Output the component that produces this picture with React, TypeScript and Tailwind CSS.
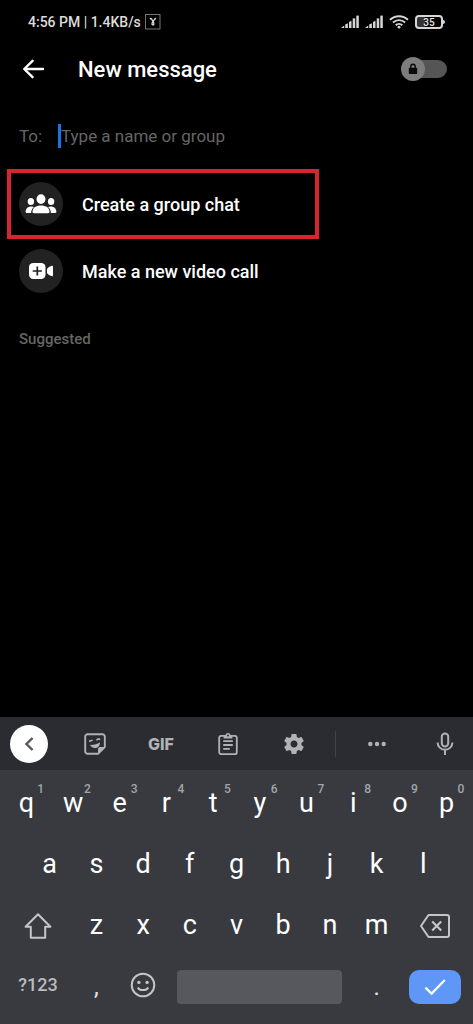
import type { ReactNode } from "react";

function SignalIcon() {
  return (
    <svg width="18" height="14" viewBox="0 0 18 14" fill="#d6d6d6" aria-hidden="true">
      <path d="M0 13 L3.2 10.4 V13Z" />
      <path d="M4.2 9.6 L6.9 8.2 V13 H4.2Z" />
      <path d="M8 7 L10.5 5.7 V13 H8Z" />
      <rect x="11.7" y="3.4" width="2.5" height="9.6" />
      <rect x="15.3" y="0.6" width="2.5" height="12.4" />
    </svg>
  );
}

function WifiIcon() {
  return (
    <svg width="20" height="14" viewBox="0 0 20 14" fill="none" stroke="#d6d6d6" strokeWidth="1.9" aria-hidden="true">
      <path d="M1 4.8 C6 0 14 0 19 4.8" />
      <path d="M3.9 7.5 C7.4 4.3 12.6 4.3 16.1 7.5" />
      <path d="M6.7 10.2 C8.6 8.4 11.4 8.4 13.3 10.2" />
      <circle cx="10" cy="12.2" r="1.4" fill="#d6d6d6" stroke="none" />
    </svg>
  );
}

function StatusBar() {
  return (
    <div className="flex h-11 items-center justify-between px-7">
      <div className="flex items-center gap-1 text-[14px] font-medium text-[#dcdcdc]">
        <span>4:56 PM | 1.4KB/s</span>
        <svg width="16" height="16" viewBox="0 0 16 16" fill="none" aria-hidden="true">
          <rect x="0.5" y="0.5" width="14.5" height="14.5" stroke="#777" />
          <path d="M4.8 4.5 C6.6 4.2 7 5.6 8 7.3 C9 9.2 9.3 10.8 8 10.8 C6.6 10.8 6.8 9 8 7.3 L10.8 4" stroke="#ddd" strokeWidth="1.3" />
        </svg>
      </div>
      <div className="flex items-center gap-[6px]">
        <SignalIcon />
        <SignalIcon />
        <WifiIcon />
        <div className="flex items-center">
          <span className="flex h-[14px] w-7 items-center justify-center rounded-[4px] border-2 border-[#d6d6d6] bg-linear-to-r from-[#333] from-35% to-black to-35% text-[10px] font-medium text-[#e6e6e6]">
            35
          </span>
          <span className="h-1 w-[2px] rounded-r-sm bg-[#d6d6d6]" />
        </div>
      </div>
    </div>
  );
}

function Header() {
  return (
    <header className="flex h-[50px] items-center pr-[26px] pl-[22px]">
      <button aria-label="Back">
        <svg width="24" height="24" viewBox="0 0 24 24" fill="none" stroke="#fff" strokeWidth="2.4" strokeLinecap="round" strokeLinejoin="round">
          <path d="M21 12 H2.5 M10.6 3.8 L2.2 12 L10.6 20.2" />
        </svg>
      </button>
      <h1 className="ml-8 flex-1 text-[22px] font-medium">New message</h1>
      <button role="switch" aria-checked="false" aria-label="Secret conversation" className="flex w-[46px] items-center rounded-full">
        <span className="z-10 flex size-6 shrink-0 items-center justify-center rounded-full bg-[#7d7d7d]">
          <svg width="10" height="12" viewBox="0 0 10 12" aria-hidden="true">
            <path d="M2.8 5 V3.4 a2.2 2.2 0 0 1 4.4 0 V5" fill="none" stroke="#0a0a0a" strokeWidth="1.4" />
            <rect x="0.8" y="4.8" width="8.4" height="6.2" rx="0.8" fill="#0a0a0a" />
          </svg>
        </span>
        <span className="-ml-3 h-[18px] flex-1 rounded-r-full bg-[#555]" />
      </button>
    </header>
  );
}

function GroupIcon() {
  return (
    <svg width="32" height="20" viewBox="0 0 32 20" fill="#fff" aria-hidden="true">
      <ellipse cx="16" cy="5.1" rx="4.5" ry="4.9" />
      <path d="M7.5 17.8 C7.5 13.6 11 11.4 16 11.4 S24.5 13.6 24.5 17.8 C24.5 18.8 24 19.2 23.1 19.2 H8.9 C8 19.2 7.5 18.8 7.5 17.8Z" />
      <ellipse cx="5.9" cy="7.5" rx="3.2" ry="3.5" />
      <ellipse cx="26.1" cy="7.5" rx="3.2" ry="3.5" />
      <path d="M0.6 17.8 C0.6 14.5 3 12.4 6.2 12.4 C7.3 12.4 8.2 12.6 9 13 C7 14.5 6.2 16.5 6.1 19 H1.6 C0.9 19 0.6 18.5 0.6 17.8Z" />
      <path d="M31.4 17.8 C31.4 14.5 29 12.4 25.8 12.4 C24.7 12.4 23.8 12.6 23 13 C25 14.5 25.8 16.5 25.9 19 H30.4 C31.1 19 31.4 18.5 31.4 17.8Z" />
    </svg>
  );
}

function VideoPlusIcon() {
  return (
    <svg width="24" height="16" viewBox="0 0 24 16" aria-hidden="true">
      <rect x="0" y="0" width="16.5" height="16" rx="4.2" fill="#fff" />
      <path d="M18 6.4 C18 5.2 19.6 4 22.2 2.9 C23.3 2.5 24 2.9 24 4 V12 C24 13.1 23.3 13.5 22.2 13.1 C19.6 12 18 10.8 18 9.6Z" fill="#fff" />
      <path d="M8.3 3.4 V12.6 M3.7 8 H12.9" stroke="#222" strokeWidth="1.7" />
    </svg>
  );
}

function Action({ icon, label }: { icon: ReactNode; label: string }) {
  return (
    <button className="flex w-full items-center gap-[19px] text-left text-[18px] font-medium">
      <span className="flex size-11 items-center justify-center rounded-full bg-[#222]">{icon}</span>
      <span>{label}</span>
    </button>
  );
}

function LetterKey({ letter, hint }: { letter: string; hint?: string }) {
  return (
    <button className="relative col-span-2 flex items-center justify-center text-[27px] text-white">
      {letter}
      {hint && <span className="absolute top-2 right-[3px] w-3 text-center text-[12px] leading-4 font-medium text-[#a3a5a8]">{hint}</span>}
    </button>
  );
}

function Toolbar() {
  return (
    <div className="grid h-[53px] grid-cols-[61fr_67fr_66fr_67fr_66fr_17fr_66fr_63fr] items-center justify-items-center bg-[#2a2c31] text-[#b0b2b5]">
      <div className="pr-1">
        <button aria-label="Collapse toolbar" className="flex size-[38px] items-center justify-center rounded-full bg-white">
          <svg width="12" height="16" viewBox="0 0 12 16" fill="none" stroke="#55575b" strokeWidth="2.4">
            <path d="M9.6 2 L3.4 8 L9.6 14" />
          </svg>
        </button>
      </div>
      <button aria-label="Stickers">
        <svg width="22" height="22" viewBox="0 0 22 22" fill="none" stroke="currentColor" strokeWidth="1.9">
          <path d="M14 20.8 H4 A2.6 2.6 0 0 1 1.2 18 V4 A2.6 2.6 0 0 1 4 1.2 H18 A2.6 2.6 0 0 1 20.8 4 V14Z" strokeLinejoin="round" />
          <path d="M14 20.6 V16 A2 2 0 0 1 16 14 H20.6Z" fill="currentColor" stroke="none" />
          <path d="M5 8.2 L8.6 7.2 M12.8 7.4 A1.6 1.6 0 0 1 15.8 6.8" strokeWidth="1.7" />
          <path d="M6 11.8 C9 12.2 13 11 16 9.4 C16 12.8 13.8 15 11 15 C8.6 15 6.6 13.8 6 11.8Z" fill="currentColor" stroke="none" />
        </svg>
      </button>
      <button className="font-[Inter,sans-serif] text-[16px] font-extrabold">GIF</button>
      <button aria-label="Clipboard">
        <svg width="20" height="24" viewBox="0 0 20 24" fill="none" stroke="currentColor" strokeWidth="1.8">
          <rect x="1.2" y="3.8" width="17.6" height="18.4" rx="2" />
          <path d="M5.2 9.2 H14.8 M5.2 13 H14.8 M5.2 16.8 H11.8" />
          <path d="M5.6 3 H7.4 A2.7 2.7 0 0 1 12.6 3 H14.4 V6.4 H5.6Z" fill="currentColor" stroke="none" />
          <circle cx="10" cy="3.6" r="1" fill="#2a2c31" stroke="none" />
        </svg>
      </button>
      <button aria-label="Settings">
        <svg width="24" height="24" viewBox="0 0 24 24" fill="currentColor">
          <path d="M19.43 12.98c.04-.32.07-.64.07-.98s-.03-.66-.07-.98l2.11-1.65c.19-.15.24-.42.12-.64l-2-3.46c-.12-.22-.39-.3-.61-.22l-2.49 1c-.52-.4-1.08-.73-1.69-.98l-.38-2.65C14.46 2.18 14.25 2 14 2h-4c-.25 0-.46.18-.49.42l-.38 2.65c-.61.25-1.17.59-1.69.98l-2.49-1c-.23-.09-.49 0-.61.22l-2 3.46c-.13.22-.07.49.12.64l2.11 1.65c-.04.32-.07.65-.07.98s.03.66.07.98l-2.11 1.65c-.19.15-.24.42-.12.64l2 3.46c.12.22.39.3.61.22l2.49-1c.52.4 1.08.73 1.69.98l.38 2.65c.03.24.24.42.49.42h4c.25 0 .46-.18.49-.42l.38-2.65c.61-.25 1.17-.59 1.69-.98l2.49 1c.23.09.49 0 .61-.22l2-3.46c.12-.22.07-.49-.12-.64l-2.11-1.65zM12 15.5c-1.93 0-3.5-1.57-3.5-3.5s1.57-3.5 3.5-3.5 3.5 1.57 3.5 3.5-1.57 3.5-3.5 3.5z" />
        </svg>
      </button>
      <span className="h-[26px] w-px bg-[#404246]" />
      <button aria-label="More">
        <svg width="18" height="6" viewBox="0 0 18 6" fill="currentColor">
          <circle cx="2.3" cy="3" r="2.2" />
          <circle cx="9" cy="3" r="2.2" />
          <circle cx="15.7" cy="3" r="2.2" />
        </svg>
      </button>
      <div className="pl-[6px]">
        <button aria-label="Voice input" className="block">
          <svg width="18" height="24" viewBox="0 0 18 24" fill="none" stroke="currentColor" strokeWidth="2">
            <rect x="5.8" y="1.4" width="6.4" height="13" rx="3.2" />
            <path d="M1.6 10.4 A7.4 7.4 0 0 0 16.4 10.4 M9 17.8 V23" />
          </svg>
        </button>
      </div>
    </div>
  );
}

const topRow = ["q", "w", "e", "r", "t", "y", "u", "i", "o", "p"];
const middleRow = ["a", "s", "d", "f", "g", "h", "j", "k", "l"];
const bottomRow = ["z", "x", "c", "v", "b", "n", "m"];

function Keyboard() {
  return (
    <section aria-label="Keyboard" className="mt-auto bg-[#383a3f]">
      <Toolbar />
      <div className="px-[3px] pt-[3px] pb-[7px]">
        <div className="grid h-[61px] grid-cols-20">
          {topRow.map((letter, i) => (
            <LetterKey key={letter} letter={letter} hint={String((i + 1) % 10)} />
          ))}
        </div>
        <div className="grid h-[61px] grid-cols-20">
          <span />
          {middleRow.map((letter) => (
            <LetterKey key={letter} letter={letter} />
          ))}
        </div>
        <div className="grid h-[61px] grid-cols-20">
          <button aria-label="Shift" className="col-span-3 flex items-center justify-center">
            <svg width="28" height="26" viewBox="0 0 28 26" fill="none" stroke="#c4c5c7" strokeWidth="2" strokeLinejoin="round">
              <path d="M14 1.2 L26.4 13.8 H21.2 V24.8 H6.8 V13.8 H1.6Z" />
            </svg>
          </button>
          {bottomRow.map((letter) => (
            <LetterKey key={letter} letter={letter} />
          ))}
          <button aria-label="Backspace" className="col-span-3 flex items-center justify-center">
            <svg width="30" height="24" viewBox="0 0 30 24" fill="none" stroke="#c4c5c7" strokeWidth="2" strokeLinejoin="round">
              <path d="M8.5 1 H27 A2 2 0 0 1 29 3 V21 A2 2 0 0 1 27 23 H8.5 L1 12Z" />
              <path d="M12.2 7.4 L21.2 16.6 M21.2 7.4 L12.2 16.6" strokeWidth="2.2" />
            </svg>
          </button>
        </div>
        <div className="grid h-[61px] grid-cols-20 items-center">
          <button className="col-span-3 pb-1 text-[18px] font-medium text-[#b9babd]">?123</button>
          <button className="col-span-2 text-[24px] text-[#e4e5e6]">,</button>
          <button aria-label="Emoji" className="col-span-2 flex justify-center pb-1">
            <svg width="26" height="26" viewBox="0 0 26 26" fill="none" stroke="#c4c5c7" strokeWidth="2">
              <circle cx="13" cy="13" r="11.3" />
              <circle cx="8.9" cy="10.4" r="1.7" fill="#c4c5c7" stroke="none" />
              <circle cx="17.1" cy="10.4" r="1.7" fill="#c4c5c7" stroke="none" />
              <path d="M7.8 15.4 C9.8 19 16.2 19 18.2 15.4" />
            </svg>
          </button>
          <button aria-label="Space" className="col-span-8 mx-[11px] h-[34px] rounded-[4px] bg-[#56585d]" />
          <button className="col-span-2 text-[24px] text-[#e4e5e6]">.</button>
          <button aria-label="Done" className="col-span-3 mx-[9px] flex h-[34px] items-center justify-center rounded-[10px] bg-[#5e97f6]">
            <svg width="22" height="18" viewBox="0 0 22 18" fill="none" stroke="#fff" strokeWidth="2.2">
              <path d="M1.4 9.6 L7.6 15.6 L20.8 2" />
            </svg>
          </button>
        </div>
      </div>
    </section>
  );
}

export default function App() {
  return (
    <div className="flex min-h-screen flex-col bg-black font-[Roboto,sans-serif] text-white">
      <StatusBar />
      <Header />
      <main>
        <div className="flex items-center px-[19px] pt-[30px] pb-[21px]">
          <label htmlFor="recipient" className="w-[39px] text-[17px] leading-6 text-[#666]">
            To:
          </label>
          <input
            id="recipient"
            type="text"
            placeholder="Type a name or group"
            className="h-6 min-w-0 flex-1 border-l-3 border-[#1b74e4] bg-transparent pt-[2px] text-[17px] outline-none placeholder:text-[#666]"
          />
        </div>
        <div className="ml-[7px] w-2/3 max-w-[312px] border-4 border-[#d9232e] py-[9px] pl-2">
          <Action icon={<GroupIcon />} label="Create a group chat" />
        </div>
        <div className="py-[10px] pl-[19px]">
          <Action icon={<VideoPlusIcon />} label="Make a new video call" />
        </div>
        <h2 className="mt-[25px] pl-[19px] text-[15px] font-medium text-[#666]">Suggested</h2>
      </main>
      <Keyboard />
    </div>
  );
}
